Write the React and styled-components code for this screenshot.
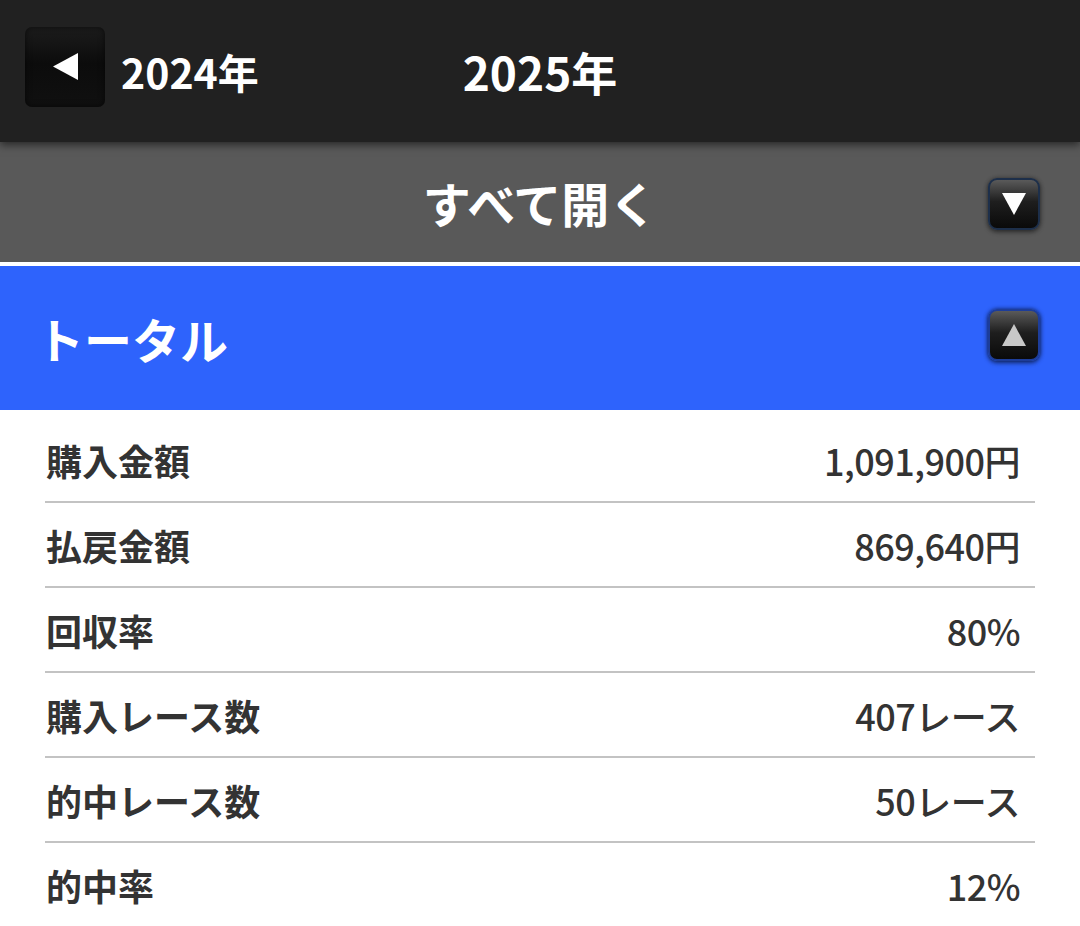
import React from 'react';
import styled, { createGlobalStyle } from 'styled-components';

const GlobalStyle = createGlobalStyle`
  body {
    margin: 0;
    background: #fff;
    font-family: "Noto Sans CJK JP", "Noto Sans", sans-serif;
  }
`;

const Header = styled.header`
  position: relative;
  z-index: 2;
  display: grid;
  grid-template-columns: 1fr auto 1fr;
  align-items: center;
  height: 142px;
  padding: 0 25px;
  box-sizing: border-box;
  background: #212121;
  box-shadow: 0 3px 8px rgba(0, 0, 0, 0.55);
`;

const PrevLink = styled.div`
  display: flex;
  align-items: center;
  gap: 16px;
`;

const BackButton = styled.div`
  display: flex;
  align-items: center;
  justify-content: center;
  width: 80px;
  height: 80px;
  margin-bottom: 9px;
  border-radius: 7px;
  background: linear-gradient(#1c1c1c, #0c0c0c 45%, #101010);
  box-shadow: inset 0 0 6px rgba(0, 0, 0, 0.6);
`;

const YearLabel = styled.span`
  color: #fff;
  font-weight: 700;
  font-size: ${({ big }) => (big ? '46px' : '41px')};
  line-height: 1;
`;

const ExpandBar = styled.div`
  display: grid;
  grid-template-columns: 1fr auto 1fr;
  align-items: center;
  height: 120px;
  padding: 0 40px;
  background: #595959;
  border-bottom: 4px solid #fff;
`;

const BarTitle = styled.span`
  grid-column: 2;
  color: #fff;
  font-weight: 700;
  font-size: 48px;
  line-height: 1;
`;

const ToggleButton = styled.div`
  grid-column: 3;
  justify-self: end;
  display: flex;
  align-items: center;
  justify-content: center;
  width: 52px;
  height: 52px;
  margin-top: ${({ shift }) => shift || 0}px;
  box-sizing: border-box;
  border-radius: 9px;
  border: 2px solid ${({ border }) => border};
  background: linear-gradient(#5a5a5a 0%, #1e1e1e 45%, #0a0a0a 100%);
  box-shadow: 0 2px 5px rgba(0, 0, 0, 0.45), 0 0 4px ${({ glow }) => glow};
`;

const SectionHead = styled.div`
  display: flex;
  align-items: center;
  justify-content: space-between;
  height: 144px;
  padding: 0 40px 0 36px;
  background: #2e63fc;
`;

const SectionTitle = styled.span`
  color: #fff;
  font-weight: 700;
  font-size: 48px;
  line-height: 1;
`;

const StatList = styled.div`
  padding: 8px 45px 0;
`;

const StatRow = styled.div`
  display: flex;
  align-items: center;
  justify-content: space-between;
  height: 83px;
  padding: 0 15px 0 1px;
  border-bottom: ${({ last }) => (last ? 'none' : '2px solid #c3c3c3')};
  color: #333;
`;

const Label = styled.span`
  font-size: 36px;
  font-weight: 700;
`;

const Value = styled.span`
  font-size: 36px;
  font-weight: 500;
  letter-spacing: -0.5px;
`;

const Triangle = ({ dir, color }) => {
  const shapes = {
    left: { w: 25, h: 27, pts: '0,13.5 25,0 25,27' },
    down: { w: 24, h: 22, pts: '0,0 24,0 12,22' },
    up: { w: 24, h: 22, pts: '12,0 24,22 0,22' },
  };
  const { w, h, pts } = shapes[dir];
  return (
    <svg width={w} height={h} viewBox={`0 0 ${w} ${h}`}>
      <polygon points={pts} fill={color} />
    </svg>
  );
};

const stats = [
  ['購入金額', '1,091,900円'],
  ['払戻金額', '869,640円'],
  ['回収率', '80%'],
  ['購入レース数', '407レース'],
  ['的中レース数', '50レース'],
  ['的中率', '12%'],
];

const App = () => (
  <>
    <GlobalStyle />
    <Header>
      <PrevLink>
        <BackButton>
          <Triangle dir="left" color="#fff" />
        </BackButton>
        <YearLabel>2024年</YearLabel>
      </PrevLink>
      <YearLabel big>2025年</YearLabel>
      <div />
    </Header>
    <ExpandBar>
      <BarTitle>すべて開く</BarTitle>
      <ToggleButton border="#1d2f4a" glow="rgba(0,0,0,0.3)" shift={4}>
        <Triangle dir="down" color="#fff" />
      </ToggleButton>
    </ExpandBar>
    <SectionHead>
      <SectionTitle>トータル</SectionTitle>
      <ToggleButton border="#1d3d9a" glow="rgba(10,30,90,0.8)" shift={-6}>
        <Triangle dir="up" color="#c8c8c8" />
      </ToggleButton>
    </SectionHead>
    <StatList>
      {stats.map(([label, value], i) => (
        <StatRow key={label} last={i === stats.length - 1}>
          <Label>{label}</Label>
          <Value>{value}</Value>
        </StatRow>
      ))}
    </StatList>
  </>
);

export default App;
